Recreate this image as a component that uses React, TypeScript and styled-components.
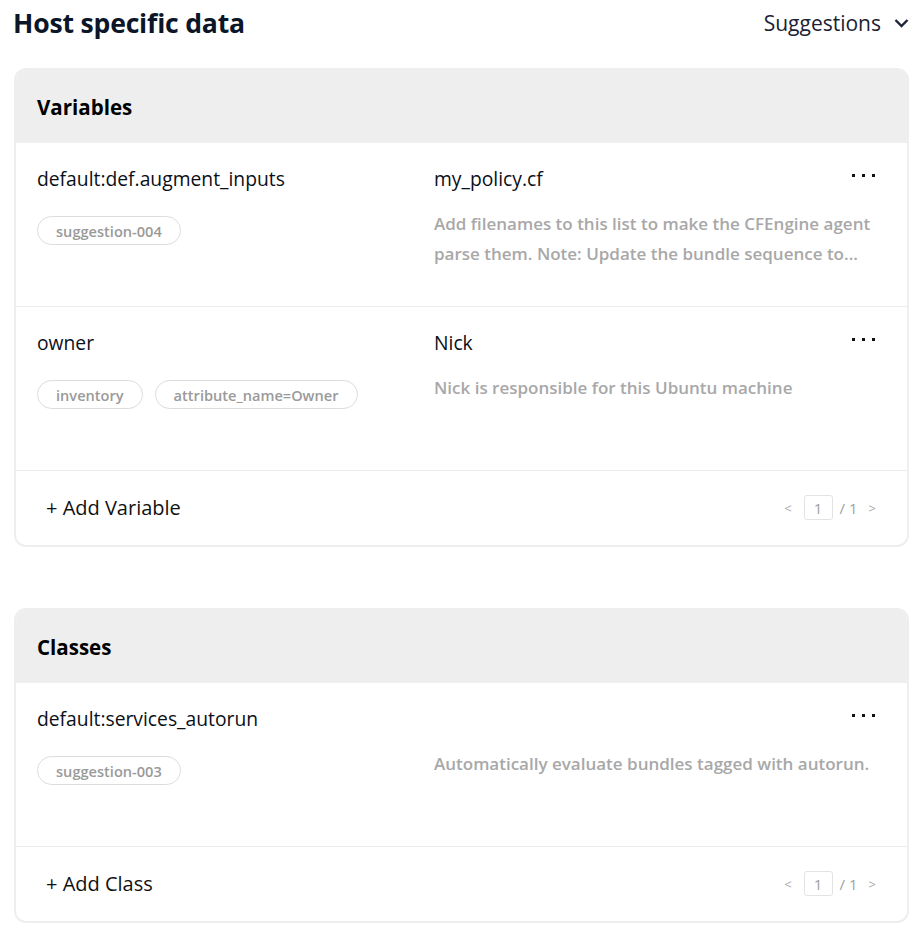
import React from "react";
import styled, { createGlobalStyle } from "styled-components";

const Global = createGlobalStyle`
  html, body { margin: 0; padding: 0; background: #fff; }
  body { font-family: "Open Sans", "Noto Sans", sans-serif; color: #0b1320; }
  * { box-sizing: border-box; }
`;

const Page = styled.div`
  width: 924px;
  padding: 0 15px 20px 14px;
`;

const TopBar = styled.div`
  display: flex;
  align-items: center;
  justify-content: space-between;
  height: 46px;
  margin-left: -1px;
`;

const Title = styled.h1`
  margin: 0;
  font-size: 26.6px;
  font-weight: 700;
  color: #0b1628;
  letter-spacing: -0.2px;
`;

const SuggestButton = styled.button`
  display: flex;
  align-items: center;
  gap: 13px;
  border: 0;
  background: none;
  padding: 0;
  font-family: inherit;
  font-size: 21px;
  color: #1a2233;
  cursor: pointer;
`;

const Card = styled.section<{ $top: number }>`
  margin-top: ${(p) => p.$top}px;
  border: 2px solid #eeeeee;
  border-radius: 12px;
  overflow: hidden;
  background: #fff;
`;

const CardHeader = styled.div`
  height: 73px;
  background: #eeeeee;
  display: flex;
  align-items: center;
  padding-left: 21px;
  font-size: 20.5px;
  font-weight: 700;
  color: #000;
`;

const Row = styled.div`
  display: grid;
  grid-template-columns: 397px 1fr auto;
  grid-template-rows: auto 1fr;
  grid-template-areas:
    "name value menu"
    "tags desc desc";
  padding: 24px 31px 0 21px;
  height: 164px;
  border-bottom: 1px solid #ececec;
`;

const Name = styled.div<{ $area: string }>`
  grid-area: ${(p) => p.$area};
  font-size: 19.3px;
  line-height: 24px;
  color: #0b0f18;
`;

const Tags = styled.div`
  grid-area: tags;
  display: flex;
  align-items: flex-start;
  gap: 12px;
  margin-top: 25px;
`;

const Tag = styled.span`
  height: 29px;
  padding: 0 18px;
  border: 1px solid #dcdcdc;
  border-radius: 15px;
  display: flex;
  align-items: center;
  font-size: 14.6px;
  font-weight: 600;
  color: #9a9a9a;
`;

const Desc = styled.div`
  grid-area: desc;
  margin-top: 18px;
  margin-right: -8px;
  font-size: 17px;
  line-height: 30px;
  font-weight: 600;
  color: #a8a8a8;
  align-self: start;
`;

const MenuCol = styled.div`
  grid-area: menu;
  display: flex;
  justify-content: flex-end;
  padding-top: 6px;
`;

const Dots = styled.svg`
  width: 24px;
  height: 6px;
`;

const Footer = styled.div`
  height: 74px;
  display: flex;
  align-items: center;
  justify-content: space-between;
  padding: 0 31px 1px 30px;
`;

const AddButton = styled.button`
  border: 0;
  background: none;
  padding: 0;
  font-family: inherit;
  font-size: 20px;
  color: #111;
  cursor: pointer;
`;

const Pager = styled.div`
  display: flex;
  align-items: center;
  font-size: 15px;
  color: #a0a0a0;
`;

const Arrow = styled.span`
  font-size: 13px;
  color: #a8a8a8;
  margin: 0 12px 0 0;
  &:last-child { margin: 0 0 0 11px; }
`;

const PageBox = styled.span`
  width: 29px;
  height: 25px;
  border: 1px solid #e3e3e3;
  border-radius: 3px;
  display: flex;
  align-items: center;
  justify-content: center;
  margin-right: 7px;
`;

const Ellipsis = () => (
  <Dots viewBox="0 0 24 6">
    <rect x="0" y="1" width="3" height="3" fill="#111" />
    <rect x="10" y="1" width="3" height="3" fill="#111" />
    <rect x="20" y="1" width="3" height="3" fill="#111" />
  </Dots>
);

const Chevron = () => (
  <svg width="15" height="10" viewBox="0 0 15 10">
    <path d="M1.5 2 L7.5 8 L13.5 2" fill="none" stroke="#1d2638" strokeWidth="2.4" />
  </svg>
);

type Item = { name: string; tags: string[]; value?: string; desc: string };

const ItemRow = ({ item }: { item: Item }) => (
  <Row>
    <Name $area="name">{item.name}</Name>
    {item.value ? <Name $area="value">{item.value}</Name> : null}
    <MenuCol>
      <Ellipsis />
    </MenuCol>
    <Tags>
      {item.tags.map((t) => (
        <Tag key={t}>{t}</Tag>
      ))}
    </Tags>
    <Desc>{item.desc}</Desc>
  </Row>
);

const Pagination = () => (
  <Pager>
    <Arrow>&lt;</Arrow>
    <PageBox>1</PageBox>/ 1
    <Arrow>&gt;</Arrow>
  </Pager>
);

const variables: Item[] = [
  {
    name: "default:def.augment_inputs",
    tags: ["suggestion-004"],
    value: "my_policy.cf",
    desc: "Add filenames to this list to make the CFEngine agent parse them. Note: Update the bundle sequence to...",
  },
  {
    name: "owner",
    tags: ["inventory", "attribute_name=Owner"],
    value: "Nick",
    desc: "Nick is responsible for this Ubuntu machine",
  },
];

const classes: Item[] = [
  {
    name: "default:services_autorun",
    tags: ["suggestion-003"],
    desc: "Automatically evaluate bundles tagged with autorun.",
  },
];

export default function App() {
  return (
    <Page>
      <Global />
      <TopBar>
        <Title>Host specific data</Title>
        <SuggestButton>
          Suggestions <Chevron />
        </SuggestButton>
      </TopBar>
      <Card $top={22}>
        <CardHeader>Variables</CardHeader>
        {variables.map((v) => (
          <ItemRow key={v.name} item={v} />
        ))}
        <Footer>
          <AddButton>+ Add Variable</AddButton>
          <Pagination />
        </Footer>
      </Card>
      <Card $top={61}>
        <CardHeader>Classes</CardHeader>
        {classes.map((v) => (
          <ItemRow key={v.name} item={v} />
        ))}
        <Footer>
          <AddButton>+ Add Class</AddButton>
          <Pagination />
        </Footer>
      </Card>
    </Page>
  );
}
